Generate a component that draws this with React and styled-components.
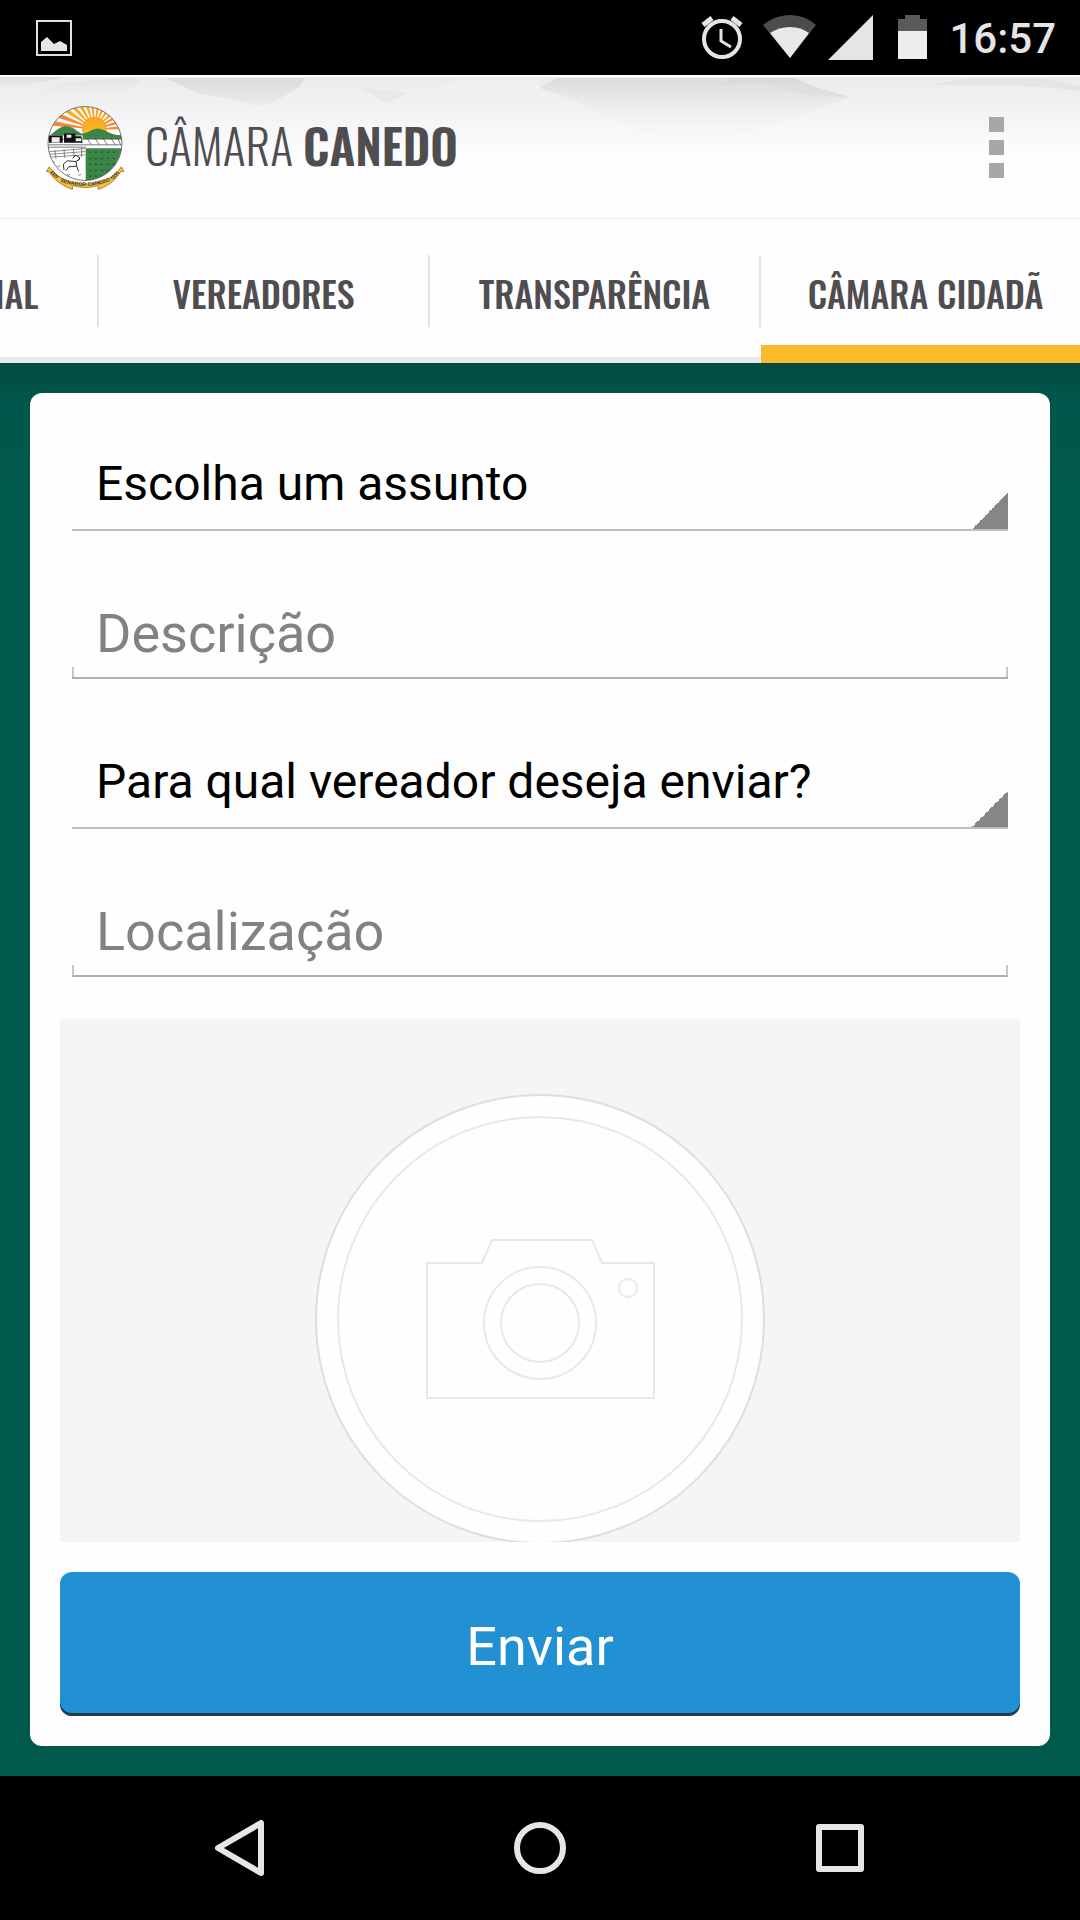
import React, { useLayoutEffect, useRef, useState } from 'react';
import styled, { createGlobalStyle, css } from 'styled-components';

const GlobalStyle = createGlobalStyle`
    * {
        box-sizing: border-box;
    }

    body {
        margin: 0;
        font-family: Roboto, sans-serif;
        background: #000;
    }
`;

const condensed = css`
    font-family: Oswald, 'Roboto Condensed', 'Open Sans Condensed', 'Liberation Sans Narrow', Roboto, sans-serif;
    color: #4f4d50;
`;

const Screen = styled.div`
    display: flex;
    flex-direction: column;
    min-height: 100vh;
`;

const StatusBar = styled.div`
    display: flex;
    align-items: center;
    height: 75px;
    padding: 0 24px 0 36px;
    background: #000;
    color: #e6e4e7;
`;

const StatusIcons = styled.div`
    display: flex;
    margin-left: auto;
`;

const Clock = styled.time`
    margin-left: 8px;
    padding-top: 3px;
    font-size: 42px;
    font-weight: 500;
    line-height: 48px;
`;

const Header = styled.header`
    position: relative;
    display: flex;
    align-items: center;
    height: 144px;
    padding: 0 66px 0 45px;
    background: #fefdff;
    box-shadow: inset 0 -1px #efedf1;
`;

const Mountains = styled.svg`
    position: absolute;
    top: 0;
    left: 0;
    width: 100%;
    height: 100px;
`;

const Emblem = styled.svg`
    position: relative;
    width: 80px;
    height: 87px;
`;

const Title = styled.h1`
    ${condensed}
    position: relative;
    margin: 0 0 4px 20px;
    font-size: 48px;
    font-weight: 300;
    line-height: 64px;

    b {
        font-weight: 600;
    }
`;

const MenuButton = styled.button`
    position: relative;
    display: flex;
    flex-direction: column;
    gap: 8px;
    margin-left: auto;
    padding: 10px;
    border: 0;
    background: none;
`;

const Dot = styled.span`
    width: 15px;
    height: 15px;
    background: #a8a6a9;
`;

const TabStrip = styled.nav`
    display: flex;
    align-items: center;
    height: 144px;
    overflow-x: auto;
    overflow-y: hidden;
    scrollbar-width: none;
    background: #fefdff;
    box-shadow: inset 0 -6px #e4ebe9;
`;

const Tab = styled.a`
    ${condensed}
    flex: 0 0 329px;
    height: 144px;
    font-size: 36px;
    font-weight: 500;
    line-height: 148px;
    text-align: center;
    text-decoration: none;

    ${props => props.$active && css`
        box-shadow: inset 0 -18px #fbba2b;
    `}
`;

const Divider = styled.span`
    flex: 0 0 2px;
    height: 72px;
    background: #e3e2e5;
`;

const Content = styled.main`
    flex: 1;
    padding: 30px;
    background: linear-gradient(#054a42, #00564a 36px, #005a4c 120px);
`;

const Card = styled.form`
    display: flex;
    flex-direction: column;
    padding: 36px 30px 30px;
    border-radius: 12px;
    background: #fefefe;
`;

const Fields = styled.div`
    display: flex;
    flex-direction: column;
    gap: 48px;
    margin: 0 12px 42px;
`;

const Select = styled.select`
    appearance: none;
    height: 102px;
    padding: 8px 48px 0 24px;
    border: 0;
    border-bottom: 2px solid #bfbdc0;
    border-radius: 0;
    outline: 0;
    background: linear-gradient(135deg, transparent 50%, #878588 50%) right bottom / 36px 36px no-repeat;
    color: #000;
    font: 48px Roboto, sans-serif;
`;

const tick = 'linear-gradient(#c8c6ca, #c8c6ca)';

const Input = styled.input`
    height: 100px;
    padding: 10px 24px 0;
    border: 0;
    border-bottom: 2px solid #b2b0b3;
    border-radius: 0;
    outline: 0;
    background:
        ${tick} left bottom / 2px 10px no-repeat,
        ${tick} right bottom / 2px 10px no-repeat;
    color: #000;
    font: 54px Roboto, sans-serif;

    &::placeholder {
        color: #838184;
        opacity: 1;
    }
`;

const PhotoButton = styled.button`
    display: flex;
    justify-content: center;
    align-items: flex-start;
    height: 523px;
    padding: 75px 0 0;
    border: 0;
    overflow: hidden;
    background: #f5f4f7;

    svg {
        flex: none;
    }
`;

const SendButton = styled.button`
    height: 144px;
    margin-top: 30px;
    padding: 4px 0 0;
    border: 0;
    border-radius: 12px;
    background: #2191d4;
    box-shadow: inset 0 -3px #263a47;
    color: #fff;
    font: 54px Roboto, sans-serif;
`;

const SystemNav = styled.div`
    display: flex;
    justify-content: center;
    height: 144px;
    background: #000;
`;

const NavButton = styled.button`
    display: flex;
    flex: 0 1 300px;
    align-items: center;
    justify-content: center;
    padding: 0;
    border: 0;
    background: none;

    svg {
        fill: none;
        stroke: #e6e6e8;
        stroke-width: 6;
        stroke-linejoin: round;
    }
`;

const PictureIcon = () => (
    <svg width="36" height="36" viewBox="0 0 36 36">
        <rect x="1" y="1" width="34" height="34" fill="none" stroke="#e0dee1" strokeWidth="2" />
        <path d="M5 31V22l6-5 7 7 6-3 7 4v6z" fill="#e6e4e7" />
    </svg>
);

const AlarmIcon = () => (
    <svg width="60" height="75" viewBox="0 0 60 75" fill="none" stroke="#e6e4e7">
        <circle cx="27" cy="39" r="18" strokeWidth="4" />
        <path d="M26 29v12l10 6" strokeWidth="3" />
        <path d="M8 25l9-7M37 18l9 7" strokeWidth="5" />
    </svg>
);

const WifiIcon = () => (
    <svg width="66" height="75" viewBox="0 0 66 75">
        <path d="M35 58L8 25Q20 15 35 15t26 10z" fill="#4c4b4e" />
        <path d="M35 58L15 33q9-6 20-6t19 6z" fill="#e9e7ea" />
    </svg>
);

const SignalIcon = () => (
    <svg width="66" height="75" viewBox="0 0 66 75">
        <path d="M7 60L52 15v45z" fill="#e6e4e7" />
    </svg>
);

const BatteryIcon = () => (
    <svg width="54" height="75" viewBox="0 0 54 75">
        <path d="M11 31V19h7v-4h15v4h7v12z" fill="#5b595c" />
        <path d="M11 31h29v28H11z" fill="#efedf0" />
    </svg>
);

const HeaderMountains = () => (
    <Mountains viewBox="0 0 1080 100" preserveAspectRatio="none" aria-hidden="true">
        <defs>
            <linearGradient id="haze" x2="0" y2="1">
                <stop offset="0" stopColor="#ebeaec" />
                <stop offset=".45" stopColor="#f5f4f6" />
                <stop offset=".85" stopColor="#fefdff" />
            </linearGradient>
            <linearGradient id="ridge" x2="0" y2="1">
                <stop offset="0" stopColor="#dcdbdd" />
                <stop offset="1" stopColor="#ebeaec" />
            </linearGradient>
            <linearGradient id="slope" x2="0" y2="1">
                <stop offset="0" stopColor="#dcdbdd" />
                <stop offset="1" stopColor="#f8f7f9" stopOpacity="0" />
            </linearGradient>
        </defs>
        <path d="M0 0h1080v100H0z" fill="url(#haze)" />
        <path d="M0 2h64L30 10 0 20z" fill="url(#slope)" />
        <path d="M0 34L64 8l70-6 6 6-24 14z" fill="url(#slope)" opacity=".6" />
        <path d="M165 3h140l-5 8-25 16-17 4-34-8-26-5z" fill="url(#ridge)" />
        <path d="M362 13l46 5-22 10z" fill="#e2e1e3" opacity=".5" />
        <path d="M425 18L460 4h80v10z" fill="#f3f2f4" opacity=".6" />
        <path d="M540 13l16-10h239l20 9 35 10-60 22-78 24-60-8-43-18-35-17z" fill="url(#slope)" />
        <path d="M712 10l20-7h63l20 9 35 10-40-1-48-13-30 2z" fill="#d4d3d5" opacity=".3" />
        <path d="M930 10l40-7h70l40 8v5l-25-3-45-3z" fill="#dddcde" opacity=".5" />
        <path d="M0 0h1080v2H0z" fill="#fff" />
    </Mountains>
);

const rays = [-82, -69, -56, -43, -30, -17, -4, 9, 22, 35, 48, 61, 74, 87];
const crops = [180, 198, 216, 234, 252];

const CityEmblem = () => (
    <Emblem viewBox="45 40 240 260" role="img" aria-label="Senador Canedo">
        <defs>
            <clipPath id="seal"><circle cx="165" cy="158" r="110" /></clipPath>
            <linearGradient id="sun" x2="0" y2="1">
                <stop offset="0" stopColor="#f9a51f" />
                <stop offset="1" stopColor="#fdc632" />
            </linearGradient>
        </defs>
        <g clipPath="url(#seal)">
            <path d="M45 40h240v240H45z" fill="#fff" />
            {rays.map(angle => (
                <path
                    key={angle}
                    d="M193 115L183 -45h20z"
                    fill={Math.abs(angle) > 60 ? '#f58a35' : '#fba822'}
                    transform={`rotate(${angle} 193 115)`}
                />
            ))}
            <circle cx="193" cy="115" r="36" fill="url(#sun)" stroke="#f28b24" strokeWidth="2" />
            <path d="M50 145C70 125 90 104 112 106c20 2 28 16 45 23 20-3 30-16 47-16 22 1 40 24 75 20v16H50z" fill="#3d8447" />
            <path d="M50 134h110v10h120v28H50z" fill="#fff" />
            <path d="M158 134h122v10H158z" fill="#3d8447" />
            <path d="M167 172h113v100H167z" fill="#3b8546" />
            <path d="M50 145h230M50 162h230M50 169h118M172 144l12 18m12-18l12 18m12-18l12 18m12-18l12 18m8-18l8 18" stroke="#333" strokeWidth="2" fill="none" />
            <path d="M56 134h42v22H56zM102 128h34v8h18l4 20H102z" fill="#111" />
            <path d="M65 139h24v16H65zM110 132h14v9h-14zM137 142h17v9h-17z" fill="#eee" />
            <path d="M54 183l112-10M54 191l112-9M56 199l108-7M75 178l3 26M102 175l2 26M130 174l3 26M155 171v28" stroke="#555" strokeWidth="2" />
            <path d="M102 238l-2-18 12-10 26 2 12-8M138 212l2 14-24 2-8 12M140 226l6 16M128 203l8-10 14 8-6 8" stroke="#333" strokeWidth="3" fill="none" />
            <path d="M66 212l5 4 4-4M82 224l4 4 4-4M112 250l4 4 4-4M145 250l4 4 4-4" stroke="#333" strokeWidth="2" fill="none" />
            {[182, 201, 219, 237, 254].map(y => crops.map(x => (
                <path key={`${x}-${y}`} d={`M${x - 4} ${y}l4 4 4-4`} stroke="#1c5429" strokeWidth="3" fill="none" />
            )))}
        </g>
        <circle cx="165" cy="158" r="111" fill="none" stroke="#333" strokeWidth="2" />
        <path d="M58 228l-9 14 9 1c10 20 33 39 69 53l2-12q38 12 74 0l2 12c33-12 55-31 66-53l11-1-8-14c-17 24-38 39-65 45q-44 14-86 0c-27-7-48-22-65-45z" fill="#f4c136" stroke="#7a5b1b" strokeWidth="2" />
        <path id="ribbon" d="M90 272q75 28 152-2" fill="none" />
        <text fontFamily="Liberation Sans, sans-serif" fontSize="16" fontWeight="700" fill="#4e3b14">
            <textPath href="#ribbon">SENADOR CANEDO</textPath>
        </text>
        <path d="M62 244l18 17m-13-20l18 18m158 3l18-19m-12 21l18-20" stroke="#4e3b14" strokeWidth="4" strokeDasharray="5 2" />
    </Emblem>
);

const CameraPlaceholder = () => (
    <svg width="450" height="450" viewBox="0 0 450 450" fill="#fefdff" stroke="#e9e7ea" strokeWidth="2">
        <circle cx="225" cy="225" r="224" stroke="#dfdde0" />
        <circle cx="225" cy="225" r="202" />
        <path d="M112 169h55l10-23h100l10 23h52v135H112z" />
        <circle cx="225" cy="229" r="56" />
        <circle cx="225" cy="229" r="39" />
        <circle cx="313" cy="194" r="9" />
    </svg>
);

const tabs = ['INSTITUCIONAL', 'VEREADORES', 'TRANSPARÊNCIA', 'CÂMARA CIDADÃ'];

const Tabs = ({active}) => {
    const strip = useRef(null);

    // the last tab stays partly out of view, like the first one
    useLayoutEffect(() => {
        strip.current.scrollLeft = 232;
    }, []);

    return (
        <TabStrip ref={strip}>
            {tabs.map((tab, i) => (
                <React.Fragment key={tab}>
                    {i > 0 && <Divider />}
                    <Tab href="#" $active={tab === active}>{tab}</Tab>
                </React.Fragment>
            ))}
        </TabStrip>
    );
};

const App = () => {
    const [description, setDescription] = useState('');
    const [place, setPlace] = useState('');

    return (
        <Screen>
            <GlobalStyle />
            <StatusBar>
                <PictureIcon />
                <StatusIcons>
                    <AlarmIcon />
                    <WifiIcon />
                    <SignalIcon />
                    <BatteryIcon />
                </StatusIcons>
                <Clock>16:57</Clock>
            </StatusBar>
            <Header>
                <HeaderMountains />
                <CityEmblem />
                <Title>CÂMARA <b>CANEDO</b></Title>
                <MenuButton aria-label="Menu">
                    <Dot />
                    <Dot />
                    <Dot />
                </MenuButton>
            </Header>
            <Tabs active="CÂMARA CIDADÃ" />
            <Content>
                <Card onSubmit={e => e.preventDefault()}>
                    <Fields>
                        <Select aria-label="Assunto">
                            <option>Escolha um assunto</option>
                        </Select>
                        <Input
                            aria-label="Descrição"
                            placeholder="Descrição"
                            value={description}
                            onChange={e => setDescription(e.target.value)}
                        />
                        <Select aria-label="Vereador">
                            <option>Para qual vereador deseja enviar?</option>
                        </Select>
                        <Input
                            aria-label="Localização"
                            placeholder="Localização"
                            value={place}
                            onChange={e => setPlace(e.target.value)}
                        />
                    </Fields>
                    <PhotoButton type="button" aria-label="Adicionar foto">
                        <CameraPlaceholder />
                    </PhotoButton>
                    <SendButton type="submit">Enviar</SendButton>
                </Card>
            </Content>
            <SystemNav>
                <NavButton aria-label="Voltar">
                    <svg width="72" height="72" viewBox="0 0 72 72"><path d="M57 11v50L14 36z" /></svg>
                </NavButton>
                <NavButton aria-label="Início">
                    <svg width="72" height="72" viewBox="0 0 72 72"><circle cx="36" cy="36" r="23" /></svg>
                </NavButton>
                <NavButton aria-label="Recentes">
                    <svg width="72" height="72" viewBox="0 0 72 72"><path d="M15 15h42v42H15z" /></svg>
                </NavButton>
            </SystemNav>
        </Screen>
    );
};

export default App;
